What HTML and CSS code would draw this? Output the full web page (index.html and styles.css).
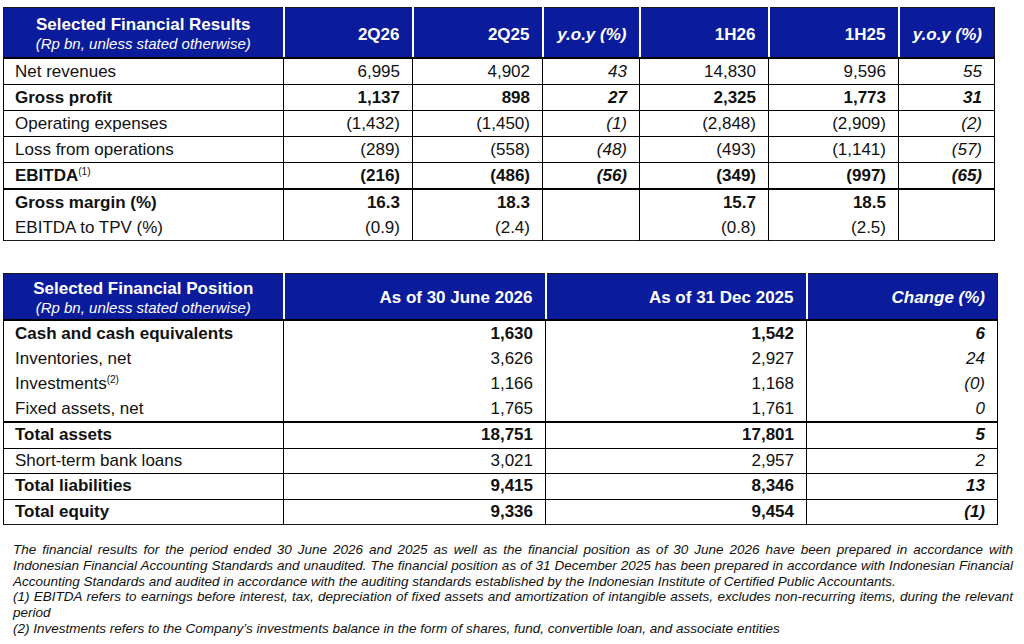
FILE: index.html
```html
<!DOCTYPE html>
<html lang="en">
<head>
<meta charset="utf-8">
<title>Selected Financial Results</title>
<link rel="stylesheet" href="styles.css">
</head>
<body>
<div class="page">
  <table class="fin t1">
    <colgroup>
      <col style="width:280px"><col style="width:129px"><col style="width:130px"><col style="width:97px"><col style="width:129px"><col style="width:130px"><col style="width:96px">
    </colgroup>
    <thead>
      <tr>
        <th class="title"><div class="tt">Selected Financial Results</div><div class="st">(Rp bn, unless stated otherwise)</div></th>
        <th>2Q26</th>
        <th>2Q25</th>
        <th class="i">y.o.y (%)</th>
        <th>1H26</th>
        <th>1H25</th>
        <th class="i">y.o.y (%)</th>
      </tr>
    </thead>
    <tbody>
      <tr class="r">
        <td class="lbl">Net revenues</td><td>6,995</td><td>4,902</td><td class="i">43</td><td>14,830</td><td>9,596</td><td class="i">55</td>
      </tr>
      <tr class="r sep b">
        <td class="lbl">Gross profit</td><td>1,137</td><td>898</td><td class="i">27</td><td>2,325</td><td>1,773</td><td class="i">31</td>
      </tr>
      <tr class="r sep">
        <td class="lbl">Operating expenses</td><td>(1,432)</td><td>(1,450)</td><td class="i">(1)</td><td>(2,848)</td><td>(2,909)</td><td class="i">(2)</td>
      </tr>
      <tr class="r sep">
        <td class="lbl">Loss from operations</td><td>(289)</td><td>(558)</td><td class="i">(48)</td><td>(493)</td><td>(1,141)</td><td class="i">(57)</td>
      </tr>
      <tr class="r sep b">
        <td class="lbl">EBITDA<sup>(1)</sup></td><td>(216)</td><td>(486)</td><td class="i">(56)</td><td>(349)</td><td>(997)</td><td class="i">(65)</td>
      </tr>
      <tr class="s sep2 b">
        <td class="lbl">Gross margin (%)</td><td>16.3</td><td>18.3</td><td class="i"></td><td>15.7</td><td>18.5</td><td class="i"></td>
      </tr>
      <tr class="s">
        <td class="lbl">EBITDA to TPV (%)</td><td>(0.9)</td><td>(2.4)</td><td class="i"></td><td>(0.8)</td><td>(2.5)</td><td class="i"></td>
      </tr>
    </tbody>
  </table>

  <table class="fin t2">
    <colgroup>
      <col style="width:280px"><col style="width:262px"><col style="width:261px"><col style="width:191px">
    </colgroup>
    <thead>
      <tr>
        <th class="title"><div class="tt">Selected Financial Position</div><div class="st">(Rp bn, unless stated otherwise)</div></th>
        <th>As of 30 June 2026</th>
        <th>As of 31 Dec 2025</th>
        <th class="i">Change (%)</th>
      </tr>
    </thead>
    <tbody>
      <tr class="s b">
        <td class="lbl">Cash and cash equivalents</td><td>1,630</td><td>1,542</td><td class="i">6</td>
      </tr>
      <tr class="s">
        <td class="lbl">Inventories, net</td><td>3,626</td><td>2,927</td><td class="i">24</td>
      </tr>
      <tr class="s">
        <td class="lbl">Investments<sup>(2)</sup></td><td>1,166</td><td>1,168</td><td class="i">(0)</td>
      </tr>
      <tr class="s">
        <td class="lbl">Fixed assets, net</td><td>1,765</td><td>1,761</td><td class="i">0</td>
      </tr>
      <tr class="r sep2 b">
        <td class="lbl">Total assets</td><td>18,751</td><td>17,801</td><td class="i">5</td>
      </tr>
      <tr class="r sep">
        <td class="lbl">Short-term bank loans</td><td>3,021</td><td>2,957</td><td class="i">2</td>
      </tr>
      <tr class="r sep b">
        <td class="lbl">Total liabilities</td><td>9,415</td><td>8,346</td><td class="i">13</td>
      </tr>
      <tr class="r sep b">
        <td class="lbl">Total equity</td><td>9,336</td><td>9,454</td><td class="i">(1)</td>
      </tr>
    </tbody>
  </table>

  <div class="notes">
    <p>The financial results for the period ended 30 June 2026 and 2025 as well as the financial position as of 30 June 2026 have been prepared in accordance with Indonesian Financial Accounting Standards and unaudited. The financial position as of 31 December 2025 has been prepared in accordance with Indonesian Financial Accounting Standards and audited in accordance with the auditing standards established by the Indonesian Institute of Certified Public Accountants.</p>
    <p>(1) EBITDA refers to earnings before interest, tax, depreciation of fixed assets and amortization of intangible assets, excludes non-recurring items, during the relevant period</p>
    <p>(2) Investments refers to the Company’s investments balance in the form of shares, fund, convertible loan, and associate entities</p>
  </div>
</div>
</body>
</html>
```

FILE: styles.css
```css
html, body {
  margin: 0;
  padding: 0;
  background: #ffffff;
}

body {
  font-family: "Liberation Sans", Arial, sans-serif;
  color: #111111;
}

.page {
  padding: 7px 0 0 3px;
}

.fin {
  border-collapse: collapse;
  table-layout: fixed;
  border: 1px solid #1a1a1a;
  font-size: 17px;
}

.t1 {
  width: 991px;
}

.t2 {
  width: 994px;
  margin-top: 32px;
}

.fin th {
  background: #0a1b9b;
  color: #ffffff;
  font-weight: bold;
  text-align: right;
  padding: 4px 12px 0 8px;
  border-bottom: 2px solid #000000;
  line-height: 20px;
}

.fin th + th {
  border-left: 2px solid #ffffff;
}

.t1 th {
  height: 45px;
}

.t2 th {
  height: 42px;
  padding-top: 3px;
}

.fin th.title {
  text-align: center;
  padding-left: 4px;
  padding-right: 4px;
}

.tt {
  line-height: 18px;
  font-size: 17px;
}

.st {
  font-style: italic;
  font-weight: normal;
  font-size: 15px;
  line-height: 19px;
}

.t2 .tt {
  line-height: 19px;
}

.fin th.i {
  font-style: italic;
}

.fin td {
  text-align: right;
  padding: 0 12px 0 8px;
  border-left: 1px solid #000000;
  border-right: 1px solid #000000;
  line-height: 20px;
  white-space: nowrap;
}

.fin td.lbl {
  text-align: left;
  padding-left: 11px;
}

.fin td.i {
  font-style: italic;
}

.fin tr.b td {
  font-weight: bold;
}

.fin tr.r td {
  height: 25px;
}

.fin tr.s td {
  height: 25px;
}

.t2 tr.r td {
  height: 24.5px;
}

.fin tr.sep td {
  border-top: 1px solid #000000;
}

.fin tr.sep2 td {
  border-top: 2px solid #000000;
}

.fin sup {
  font-size: 10px;
  line-height: 0;
  vertical-align: 6px;
  font-weight: normal;
}

.notes {
  margin-top: 17px;
  padding-left: 10px;
  width: 1000px;
  font-size: 13.5px;
  line-height: 15.8px;
  font-style: italic;
  color: #111111;
}

.notes p {
  margin: 0;
  text-align: justify;
}
```
